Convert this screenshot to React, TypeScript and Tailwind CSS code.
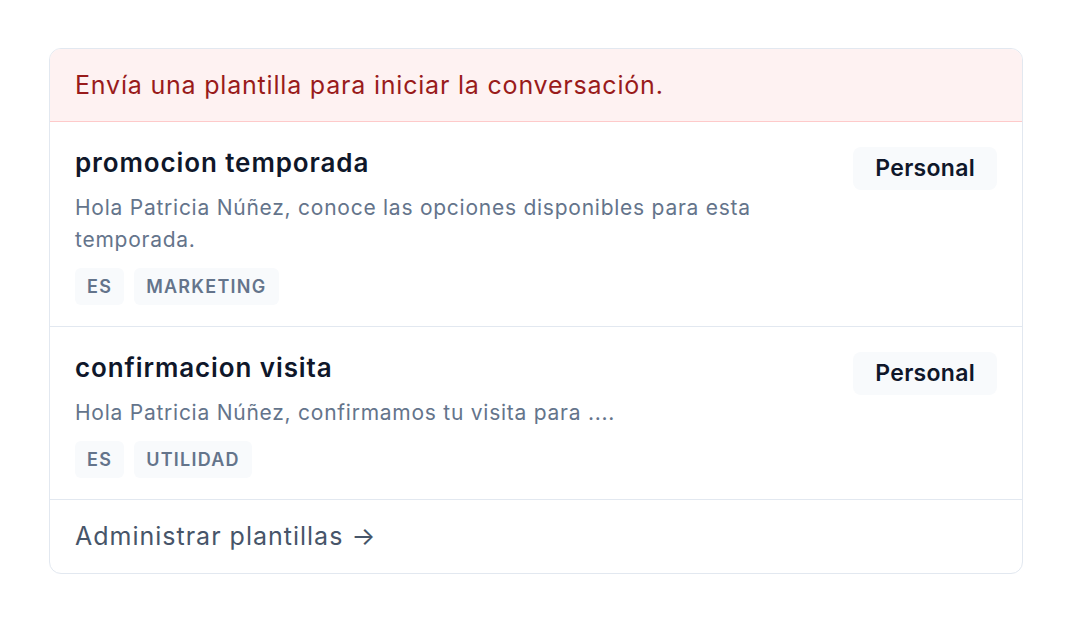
import React from 'react';

interface Template {
  name: string;
  preview: string;
  lang: string;
  category: string;
  owner: string;
}

const templates: Template[] = [
  {
    name: 'promocion temporada',
    preview: 'Hola Patricia Núñez, conoce las opciones disponibles para esta temporada.',
    lang: 'ES',
    category: 'MARKETING',
    owner: 'Personal',
  },
  {
    name: 'confirmacion visita',
    preview: 'Hola Patricia Núñez, confirmamos tu visita para ....',
    lang: 'ES',
    category: 'UTILIDAD',
    owner: 'Personal',
  },
];

function Tag({ children }: { children: React.ReactNode }) {
  return (
    <span className="inline-flex h-[37px] items-center rounded-[6px] bg-[#f8fafc] px-[12px] text-[18px] font-semibold tracking-[0.07em] text-[#64748b]">
      {children}
    </span>
  );
}

export default function App() {
  return (
    <div
      className="min-h-screen bg-white px-[49px] pt-[48px]"
      style={{ fontFamily: 'Inter, "Noto Sans", sans-serif' }}
    >
      <div className="overflow-hidden rounded-[12px] border border-[#e2e8f0] bg-white">
        {/* banner */}
        <div className="border-b border-[#fecaca] bg-[#fef2f2] px-[25px] py-[18px]">
          <p className="text-[25px] leading-[36px] tracking-[0.8px] text-[#991b1b]">
            Envía una plantilla para iniciar la conversación.
          </p>
        </div>

        {templates.map((t, i) => (
          <div
            key={t.name}
            className={`flex items-start gap-6 px-[25px] pt-[23px] pb-[21px] ${
              i > 0 ? 'border-t border-[#e2e8f0]' : ''
            }`}
          >
            <div className="flex-1">
              <h3 className="text-[26px] font-semibold leading-[36px] tracking-[0.9px] text-[#0f172a]">
                {t.name}
              </h3>
              <p className="mt-[11px] text-[21px] leading-[32px] tracking-[0.75px] text-[#64748b]">
                {t.preview}
              </p>
              <div className="mt-[12px] flex gap-[10px]">
                <Tag>{t.lang}</Tag>
                <Tag>{t.category}</Tag>
              </div>
            </div>
            <span className="mt-[2px] inline-flex h-[43px] items-center rounded-[8px] bg-[#f8fafc] px-[22px] text-[23px] font-semibold tracking-[0.3px] text-[#0f172a]">
              {t.owner}
            </span>
          </div>
        ))}

        <div className="border-t border-[#e2e8f0] px-[25px] pt-[18px] pb-[19px]">
          <a className="text-[25px] leading-[36px] tracking-[1px] text-[#475569]">
            Administrar plantillas →
          </a>
        </div>
      </div>
    </div>
  );
}
